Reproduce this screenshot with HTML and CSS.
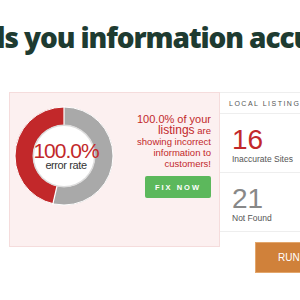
FILE: index.html
```html
<!DOCTYPE html>
<html lang="en">

<head>
    <meta charset="UTF-8">
    <meta name="viewport" content="width=device-width, initial-scale=1.0">
    <title>Listings Scan</title>
    <link rel="stylesheet" href="styles.css">
</head>

<body>
    <h1 class="headline">It tells you information accurately</h1>

    <div class="report">
        <div class="error-panel">
            <div class="donut">
                <svg width="100" height="100" viewBox="0 0 100 100">
                    <circle cx="50" cy="50" r="40" fill="none" stroke="#a9a9a9" stroke-width="18"
                        stroke-dasharray="134.7 251.3" transform="rotate(-90 50 50)" />
                    <circle cx="50" cy="50" r="40" fill="none" stroke="#c2282a" stroke-width="18"
                        stroke-dasharray="116.6 251.3" stroke-dashoffset="-134.7" transform="rotate(-90 50 50)" />
                    <circle cx="50" cy="50" r="49" fill="none" stroke="#fff" stroke-width="1" />
                    <line x1="50" y1="50" x2="50" y2="0" stroke="#fff" stroke-width="1.2" />
                    <line x1="50" y1="50" x2="38.7" y2="98.7" stroke="#fff" stroke-width="1.2" />
                    <circle cx="50" cy="50" r="31.5" fill="#ddd" />
                    <circle cx="50" cy="50" r="30" fill="#fff" />
                </svg>
                <div class="donut-label">
                    <span class="donut-value">100.0%</span>
                    <span class="donut-caption">error rate</span>
                </div>
            </div>
            <div class="error-text">
                <p>
                    <span class="lead">100.0% of your</span><br>
                    <span class="lead big">listings</span> are<br>
                    showing incorrect<br>
                    information to<br>
                    customers!
                </p>
                <button class="fix-btn">FIX NOW</button>
            </div>
        </div>

        <div class="summary">
            <div class="summary-head">LOCAL LISTINGS SCAN</div>
            <div class="stat">
                <div class="stat-num bad">16</div>
                <div class="stat-label">Inaccurate Sites</div>
            </div>
            <div class="stat">
                <div class="stat-num">21</div>
                <div class="stat-label">Not Found</div>
            </div>
            <button class="run-btn">RUN SCAN</button>
        </div>
    </div>
</body>

</html>
```

FILE: styles.css
```css
/* Basic page */
body {
    margin: 0;
    width: 300px;
    height: 300px;
    overflow: hidden;
    background-color: #fff;
    font-family: "Liberation Sans", Arial, sans-serif;
}

/* Big title, cut by the window */
.headline {
    margin: 19px 0 0 -66px;
    white-space: nowrap;
    font-family: "Open Sans", Lato, sans-serif;
    font-weight: 800;
    font-size: 28px;
    letter-spacing: -1.1px;
    line-height: 36px;
    color: #1e3b31;
}

/* Row with the two cards */
.report {
    display: flex;
    width: 520px;
    margin: 37px 0 0 9px;
}

/* Pink error card */
.error-panel {
    display: flex;
    width: 209px;
    height: 153px;
    background-color: #fcf0f0;
    border: 1px solid #f5dcdc;
}

.donut {
    display: grid;
    margin: 13px 0 0 4px;
    width: 100px;
    height: 100px;
}

.donut svg,
.donut-label {
    grid-area: 1 / 1;
}

.donut-label {
    display: flex;
    flex-direction: column;
    align-items: center;
    justify-content: center;
    padding-left: 4px;
}

.donut-value {
    font-size: 21px;
    line-height: 18px;
    letter-spacing: -1px;
    color: #c2282a;
}

.donut-caption {
    font-size: 11px;
    line-height: 11px;
    letter-spacing: -0.4px;
    color: #333;
}

.error-text {
    display: flex;
    flex-direction: column;
    align-items: flex-end;
    flex: 1;
    padding: 21px 8px 0 0;
}

.error-text p {
    margin: 0;
    text-align: right;
    font-size: 9.5px;
    line-height: 11px;
    color: #c2282a;
}

.lead {
    font-size: 11px;
}

.lead.big {
    font-size: 12px;
}

.fix-btn {
    margin-top: 7px;
    width: 66px;
    height: 22px;
    border: none;
    border-radius: 2px;
    background-color: #5cb85c;
    color: #fff;
    font-family: "Liberation Sans", Arial, sans-serif;
    font-weight: bold;
    font-size: 7.5px;
    letter-spacing: 2px;
}

/* White summary card */
.summary {
    width: 260px;
    border-top: 1px solid #eee;
}

.summary-head {
    height: 20px;
    padding-left: 9px;
    font-size: 7px;
    line-height: 21px;
    letter-spacing: 1.5px;
    color: #555;
    border-bottom: 1px solid #eee;
}

.stat {
    height: 59px;
    padding: 12px 0 0 12px;
    box-sizing: border-box;
    border-bottom: 1px solid #eee;
}

.stat-num {
    font-size: 28px;
    line-height: 28px;
    color: #888;
}

.stat-num.bad {
    color: #c2282a;
}

.stat-label {
    font-size: 8.5px;
    line-height: 10px;
    color: #555;
}

.run-btn {
    margin: 10px 0 0 35px;
    width: 110px;
    height: 31px;
    border: 1px solid #e3a66b;
    background-color: #d0813a;
    color: #fff;
    font-family: "Liberation Sans", Arial, sans-serif;
    font-size: 10px;
    text-align: left;
    padding-left: 22px;
}
```
